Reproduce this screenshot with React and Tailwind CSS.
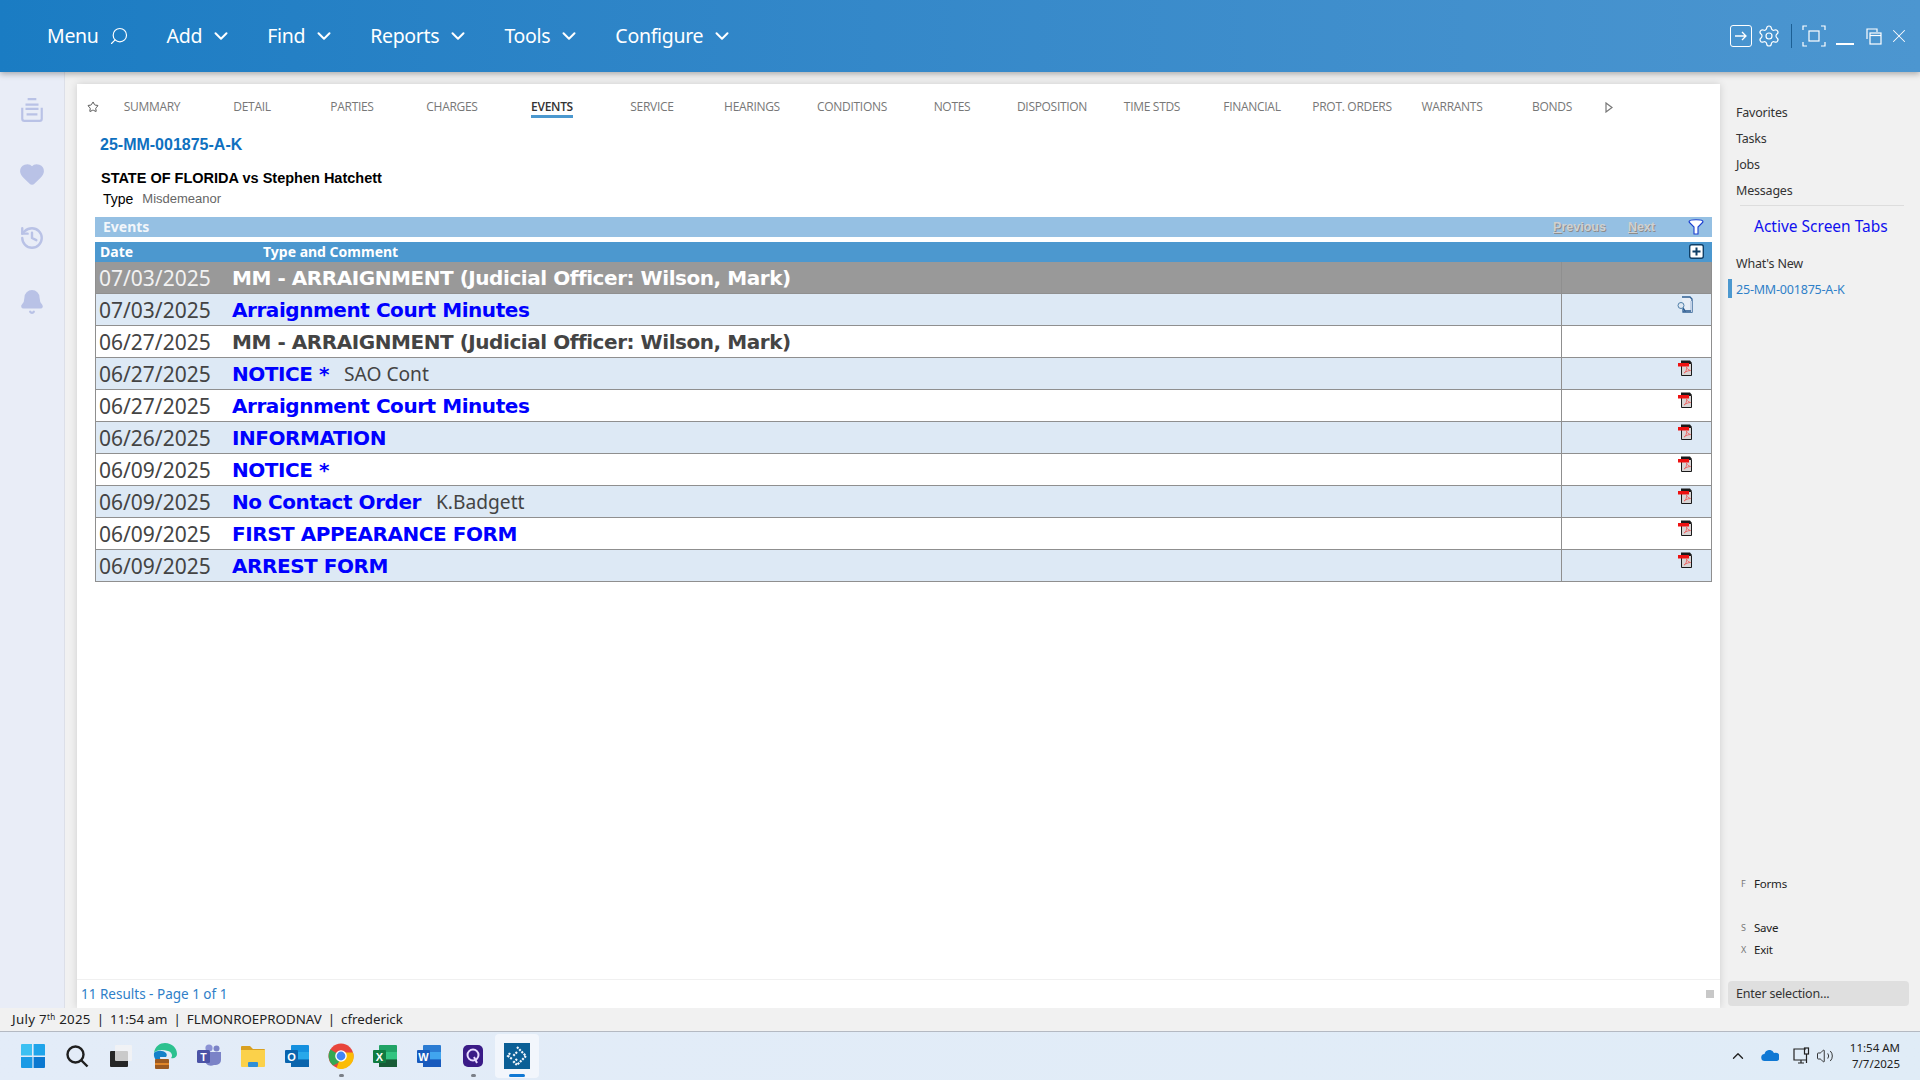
import React from 'react';
import { Search, ChevronDown, Settings, X, Heart, Bell, History, Star, ChevronUp, Volume2 } from 'lucide-react';

const menus = ['Add', 'Find', 'Reports', 'Tools', 'Configure'];
const tabs = ['SUMMARY', 'DETAIL', 'PARTIES', 'CHARGES', 'EVENTS', 'SERVICE', 'HEARINGS', 'CONDITIONS', 'NOTES', 'DISPOSITION', 'TIME STDS', 'FINANCIAL', 'PROT. ORDERS', 'WARRANTS', 'BONDS'];

const arraignment = 'MM - ARRAIGNMENT (Judicial Officer: Wilson, Mark)';
const rows = [
  { date: '07/03/2025', title: arraignment, kind: 'active' },
  { date: '07/03/2025', title: 'Arraignment Court Minutes', kind: 'link', icon: 'view' },
  { date: '06/27/2025', title: arraignment, kind: 'plain' },
  { date: '06/27/2025', title: 'NOTICE *', kind: 'link', comment: 'SAO Cont', icon: 'pdf' },
  { date: '06/27/2025', title: 'Arraignment Court Minutes', kind: 'link', icon: 'pdf' },
  { date: '06/26/2025', title: 'INFORMATION', kind: 'link', icon: 'pdf' },
  { date: '06/09/2025', title: 'NOTICE *', kind: 'link', icon: 'pdf' },
  { date: '06/09/2025', title: 'No Contact Order', kind: 'link', comment: 'K.Badgett', icon: 'pdf' },
  { date: '06/09/2025', title: 'FIRST APPEARANCE FORM', kind: 'link', icon: 'pdf' },
  { date: '06/09/2025', title: 'ARREST FORM', kind: 'link', icon: 'pdf' },
];

const PdfIcon = () => (
  <svg width="15" height="16" viewBox="0 0 15 16">
    <path d="M3.5 3.5h10v12h-10z" fill="#d8d4d4" stroke="#1a1a1a" />
    <path d="M3 .5h9l2 2.5H3z" fill="#1a1a1a" />
    <path d="M0 3h11v3.5H0z" fill="#ee1111" />
    <path d="M6 13c2-1 3-4 2.500-6 .5 2 2 3 4 3.500-2 0-4.500 1-6.500 2.500z" fill="none" stroke="#ee6a6a" strokeWidth="1" />
  </svg>
);

const ViewIcon = () => (
  <svg width="16" height="17" viewBox="0 0 16 17">
    <path d="M5 1h8l2 2v13H6v-3" fill="#e8eef6" stroke="#2f5f93" strokeWidth="1.3" />
    <path d="M14 5v10H9" fill="none" stroke="#c3d2e6" strokeWidth="2" />
    <circle cx="4" cy="9.500" r="3" fill="#dfe8f2" stroke="#4f7fa8" />
    <path d="M6 12l2 3h6" fill="none" stroke="#2f5f93" strokeWidth="1.4" />
  </svg>
);

const EventRow = ({ row, index }) => {
  const bg = row.kind === 'active' ? 'bg-[#999999]' : index % 2 === 1 ? 'bg-[#dde9f5]' : 'bg-white';
  const dateColor = row.kind === 'active' ? 'text-[#f2f2f2]' : 'text-[#444444]';
  const titleColor = row.kind === 'link' ? 'text-[#0000ff]' : row.kind === 'active' ? 'text-white' : 'text-[#444444]';
  return (
    <div className={`flex h-8 border-b border-[#8f8f8f] ${bg}`}>
      <div className="flex flex-1 items-center pt-[2px] pl-[3px]">
        <span className={`w-[133px] text-[21px] ${dateColor}`}>{row.date}</span>
        <span className={`font-['DejaVu_Sans'] text-[20px] font-bold tracking-[-0.45px] ${titleColor}`}>{row.title}</span>
        {row.comment && <span className="ml-[15px] text-[19.200px] text-[#444444]">{row.comment}</span>}
      </div>
      <div className="flex w-[150px] justify-end border-l border-[#8f8f8f] pt-[2px] pr-[18px]">
        {row.icon === 'pdf' && <PdfIcon />}
        {row.icon === 'view' && <ViewIcon />}
      </div>
    </div>
  );
};

const TopBar = () => (
  <header className="relative z-10 flex h-[72px] items-center justify-between bg-gradient-to-r from-[#1a7cc3] to-[#4c96d0] pr-[10px] pl-[47px] text-white shadow-[0_2px_6px_rgba(0,0,0,0.3)]">
    <nav className="flex items-center text-[19.500px] tracking-[-0.3px]">
      <span>Menu</span>
      <Search className="mr-[38px] ml-[10px] h-[20px] w-[20px] -scale-x-100" strokeWidth={1.4} />
      {menus.map((m) => (
        <div key={m} className="mr-[35px] flex items-center gap-[8px]">
          <span>{m}</span>
          <ChevronDown className="h-[22px] w-[22px]" strokeWidth={2.2} />
        </div>
      ))}
    </nav>
    <div className="flex items-center">
      <div className="flex h-[22px] w-[22px] items-center justify-center rounded-[3px] border-[1.5px] border-white">
        <svg width="14" height="12" viewBox="0 0 14 12" fill="none" stroke="white" strokeWidth="1.3"><path d="M1 6h11M8 2l4 4-4 4" /></svg>
      </div>
      <Settings className="ml-[5px] h-[24px] w-[24px]" strokeWidth={1.2} />
      <div className="mx-[10px] h-[24px] w-px bg-[#1c5f94]" />
      <svg width="24" height="22" viewBox="0 0 24 22" fill="none" stroke="white" strokeWidth="1.2">
        <path d="M1 5V1h4M19 1h4v4M23 17v4h-4M5 21H1v-4" />
        <rect x="7" y="6" width="10" height="10" />
      </svg>
      <div className="mt-[15px] ml-[10px] h-[2px] w-[18px] bg-white" />
      <svg className="ml-[12px]" width="16" height="17" viewBox="0 0 16 17" fill="none" stroke="white" strokeWidth="1.2">
        <path d="M1 11V1h10v3" />
        <rect x="4" y="5" width="11" height="11" />
        <path d="M4 7.500h11" />
      </svg>
      <X className="ml-[6px] h-[22px] w-[22px]" strokeWidth={1.1} />
    </div>
  </header>
);

const LeftRail = () => (
  <aside className="flex w-[65px] shrink-0 flex-col items-center gap-[38px] border-r border-[#dcdfe8] bg-[#e9edf7] pt-[25px] text-[#b9c2e6]">
    <svg width="26" height="26" viewBox="0 0 24 24" fill="none" stroke="currentColor" strokeWidth="2">
      <path d="M8 2h8M6 7h12M6 11h12M3 10v10a2 2 0 002 2h14a2 2 0 002-2V10M7 16h10" />
    </svg>
    <Heart className="h-[26px] w-[26px] fill-current" />
    <History className="h-[26px] w-[26px]" strokeWidth={2.2} />
    <Bell className="h-[26px] w-[26px] fill-current" />
  </aside>
);

const MainPanel = () => (
  <main className="flex w-[1643px] shrink-0 flex-col bg-white shadow-[0_0_8px_rgba(0,0,0,0.15)]">
    <div className="flex h-[38px] items-center pt-[8px] pl-[10px] font-['Open_Sans'] text-[12px] tracking-[-0.3px] text-[#777777]">
      <Star className="h-[12px] w-[12px] text-[#555555]" />
      <div className="ml-[3px] flex">
        {tabs.map((t) => (
          <div key={t} className="w-[100px] text-center">
            <span className={t === 'EVENTS' ? 'border-b-[3px] border-[#4b98cf] font-semibold text-[#333333]' : ''}>{t}</span>
          </div>
        ))}
      </div>
      <svg className="ml-[3px]" width="8" height="11" viewBox="0 0 8 11" fill="none" stroke="#777" strokeWidth="1.2"><path d="M1 1l6 4.500L1 10z" /></svg>
    </div>
    <div className="pt-[11px] pl-[23px] font-['Liberation_Sans'] text-[16px] font-bold text-[#0f70bf]">25-MM-001875-A-K</div>
    <div className="mt-[11px] pl-[24px] font-['Liberation_Sans'] text-[14.500px] font-bold text-black">STATE OF FLORIDA vs Stephen Hatchett</div>
    <div className="-mt-[1px] flex gap-[9px] pl-[26px] font-['Liberation_Sans'] text-[14px] text-black">
      <span>Type</span>
      <span className="text-[13px] text-[#666666]">Misdemeanor</span>
    </div>
    <div className="mt-[7px] mr-[8px] ml-[18px] flex flex-1 flex-col font-['Noto_Sans']">
      <div className="flex h-[20px] items-center justify-between bg-[#95c0e3] pr-[8px] pl-[8px] text-[14px] font-bold text-[#f2f6fa]">
        <span>Events</span>
        <div className="flex items-center font-['Liberation_Sans'] text-[12.500px] font-bold text-[#d0d0d0] [text-shadow:1px_1px_0_#8c8c8c]">
          <span className="pt-[2px]"><u>P</u>revious</span>
          <span className="ml-[22px] pt-[2px]"><u>N</u>ext</span>
          <svg className="ml-[33px]" width="16" height="16" viewBox="0 0 16 16" fill="#fff" stroke="#1a3fd0" strokeWidth="1.1">
            <ellipse cx="8" cy="2.500" rx="7" ry="1.800" />
            <path d="M1 3l5 5v7h4V8l5-5" />
          </svg>
        </div>
      </div>
      <div className="mt-[5px] flex h-[20px] items-center bg-[#4c98cf] pr-[8px] pl-[5px] text-[14px] font-bold text-white">
        <span className="w-[163px]">Date</span>
        <span className="flex-1">Type and Comment</span>
        <svg width="15" height="15" viewBox="0 0 15 15">
          <rect x=".7" y=".7" width="13.600" height="13.600" rx="2" fill="#fff" stroke="#0f3f66" strokeWidth="1.4" />
          <path d="M7.500 3.500v8M3.500 7.500h8" stroke="#0f3f66" strokeWidth="2" />
        </svg>
      </div>
      <div className="border-x border-[#8f8f8f]">
        {rows.map((r, i) => <EventRow key={i} row={r} index={i} />)}
      </div>
    </div>
    <div className="flex h-[29px] items-center justify-between border-t border-[#f0f0f0] pr-[6px] pl-[4px] font-['Noto_Sans'] text-[13.500px] text-[#2f80c8]">
      <span>11 Results - Page 1 of 1</span>
      <div className="h-[8px] w-[8px] bg-[#c8c8c8]" />
    </div>
  </main>
);

const SideLink = ({ children }) => <div className="h-[26px] leading-[26px] text-[#333333]">{children}</div>;

const ActionLink = ({ hotkey, label }) => (
  <div className="flex h-[22px] items-center text-[11.500px] text-[#222222]">
    <span className="w-[18px] pl-[5px] text-[9px] text-[#777777]">{hotkey}</span>
    <span>{label}</span>
  </div>
);

const RightPanel = () => (
  <aside className="flex flex-1 flex-col pt-[16px] pr-[11px] pl-[16px] font-['Noto_Sans'] text-[12.500px] tracking-[-0.2px]">
    <SideLink>Favorites</SideLink>
    <SideLink>Tasks</SideLink>
    <SideLink>Jobs</SideLink>
    <SideLink>Messages</SideLink>
    <div className="mt-[1px] mr-[5px] ml-[4px] h-px bg-[#dddddd]" />
    <div className="pt-[9px] pl-[18px] text-[15.500px] tracking-normal text-[#1010ee]">Active Screen Tabs</div>
    <div className="mt-[13px]"><SideLink>What's New</SideLink></div>
    <div className="relative text-[#2f80c8]">
      <div className="absolute top-[2px] -left-[8px] h-[19px] w-[4px] bg-[#4c98cf]" />
      <div className="h-[26px] leading-[26px]">25-MM-001875-A-K</div>
    </div>
    <div className="flex-1" />
    <ActionLink hotkey="F" label="Forms" />
    <div className="h-[22px]" />
    <ActionLink hotkey="S" label="Save" />
    <ActionLink hotkey="X" label="Exit" />
    <div className="mt-[20px] mb-[2px] -ml-[8px] flex h-[25px] items-center rounded-[4px] bg-[#dfdfdf] pt-[1px] pl-[8px] text-[12.500px] text-[#333333]">Enter selection...</div>
  </aside>
);

const StatusBar = () => (
  <div className="flex h-[24px] items-center gap-[6px] border-b border-[#b4b9c2] bg-[#f1f1f1] pl-[12px] font-['Noto_Sans'] text-[13.300px] text-[#222222]">
    <span className="tracking-[0.3px]">July 7<sup className="text-[8px]">th</sup> 2025</span><span>|</span>
    <span>11:54 am</span><span>|</span>
    <span>FLMONROEPRODNAV</span><span>|</span>
    <span>cfrederick</span>
  </div>
);

const TaskIcon = ({ children, dot, active }) => (
  <div className={`relative flex h-[44px] w-[44px] items-center justify-center rounded-[4px] ${active ? 'bg-[#f2f6fc]' : ''}`}>
    {children}
    {dot && <div className="absolute bottom-[1px] h-[3px] w-[5px] rounded-full bg-[#7a7f87]" />}
    {active && <div className="absolute bottom-[1px] h-[3px] w-[16px] rounded-full bg-[#0f78d4]" />}
  </div>
);

const OfficeIcon = ({ letter, tile, colors }) => (
  <svg width="26" height="26" viewBox="0 0 26 26">
    <rect x="7" y="2" width="18" height="22" rx="1" fill={colors[0]} />
    <rect x="7" y="9" width="18" height="7.500" fill={colors[1]} />
    <rect x="7" y="16.500" width="18" height="7.500" fill={colors[2]} />
    <rect x="1" y="7" width="13" height="13" rx="1" fill={tile} />
    <text x="7.500" y="17.500" textAnchor="middle" fontSize="11" fontWeight="700" fill="#fff" fontFamily="Liberation Sans">{letter}</text>
  </svg>
);

const Taskbar = () => (
  <div className="flex h-[48px] items-center justify-between bg-gradient-to-r from-[#e3ecf8] to-[#e0ecf7] pr-[20px] pl-[11px]">
    <div className="flex items-center">
      <TaskIcon>
        <svg width="24" height="24" viewBox="0 0 24 24">
          <path d="M0 1a1 1 0 011-1h10v11.400H0z" fill="#3cc0f2" />
          <path d="M12.600 0H23a1 1 0 011 1v10.400H12.600z" fill="#1fa4ea" />
          <path d="M0 13h11.400v11H1a1 1 0 01-1-1z" fill="#1a9ae5" />
          <path d="M12.600 13H24v10a1 1 0 01-1 1H12.600z" fill="#0b78d0" />
        </svg>
      </TaskIcon>
      <TaskIcon>
        <svg width="24" height="24" viewBox="0 0 24 24" fill="none" stroke="#1f1f1f" strokeWidth="2.400">
          <circle cx="10.500" cy="10.500" r="8" />
          <path d="M16.500 16.500l6 6" />
        </svg>
      </TaskIcon>
      <TaskIcon>
        <svg width="24" height="24" viewBox="0 0 24 24">
          <rect x="1" y="7" width="18" height="16" rx="1" fill="#262626" />
          <rect x="6" y="1" width="17" height="16" rx="1" fill="#f4f4f4" fillOpacity="0.800" />
        </svg>
      </TaskIcon>
      <TaskIcon>
        <svg width="26" height="28" viewBox="0 0 26 28">
          <path d="M2 11C3 4 8 1 13 1c7 0 12 5 12 11 0 3-3 5-6 4 2-2 1-6-3-7C10 7 4 8 2 11z" fill="#2cc18f" />
          <path d="M2 11c3-3 9-3 12 0 1 1 1 3 0 4H8c0 3 1 5 3 6-5 0-10-4-9-10z" fill="#1481c9" />
          <rect x="3" y="17" width="14" height="10" rx="1" fill="#9c5a22" />
          <rect x="3" y="21" width="14" height="2" fill="#e0862a" />
        </svg>
      </TaskIcon>
      <TaskIcon>
        <svg width="26" height="24" viewBox="0 0 26 24">
          <circle cx="20.500" cy="4.500" r="3" fill="#7b83c7" />
          <circle cx="13" cy="4" r="3.600" fill="#8b92d4" />
          <path d="M9 8h16v8a5 5 0 01-5 5h-2c-5 2-9-1-9-5z" fill="#7b83c7" />
          <rect x="1" y="6" width="13" height="13" rx="1.500" fill="#4b53a6" />
          <text x="7.500" y="16.500" textAnchor="middle" fontSize="10.500" fontWeight="700" fill="#fff" fontFamily="Liberation Sans">T</text>
        </svg>
      </TaskIcon>
      <TaskIcon>
        <svg width="26" height="24" viewBox="0 0 26 24">
          <path d="M1 3a1 1 0 011-1h8l3 3h11a1 1 0 011 1v3H1z" fill="#d9a020" />
          <path d="M1 6h24v16a1 1 0 01-1 1H2a1 1 0 01-1-1z" fill="#fbd14a" />
          <rect x="8" y="18" width="10" height="5" rx="1" fill="#2f8fd8" />
        </svg>
      </TaskIcon>
      <TaskIcon>
        <OfficeIcon letter="O" tile="#0a64ad" colors={['#1490df', '#28a8ea', '#0a64ad']} />
      </TaskIcon>
      <TaskIcon dot>
        <svg width="26" height="26" viewBox="0 0 26 26">
          <circle cx="13" cy="13" r="12.500" fill="#e8453c" />
          <path d="M13 13L2.500 6.500A12.500 12.500 0 005 22.500l8-4z" fill="#34a853" />
          <path d="M13 13l-4.500 12A12.500 12.500 0 0025 9.500H13z" fill="#fbbc05" />
          <circle cx="13" cy="13" r="5.800" fill="#fff" />
          <circle cx="13" cy="13" r="4.400" fill="#4285f4" />
        </svg>
      </TaskIcon>
      <TaskIcon>
        <OfficeIcon letter="X" tile="#107c41" colors={['#21a366', '#33c481', '#185c37']} />
      </TaskIcon>
      <TaskIcon>
        <OfficeIcon letter="W" tile="#185abd" colors={['#2b7cd3', '#41a5ee', '#185abd']} />
      </TaskIcon>
      <TaskIcon dot>
        <svg width="24" height="24" viewBox="0 0 24 24">
          <rect x="2" y="1" width="20" height="22" rx="5" fill="#3a1b87" />
          <circle cx="12" cy="11" r="5.500" fill="none" stroke="#e8dcff" strokeWidth="2" />
          <path d="M13 13l3 6" stroke="#e8dcff" strokeWidth="2" />
        </svg>
      </TaskIcon>
      <TaskIcon active>
        <svg width="26" height="26" viewBox="0 0 26 26">
          <rect width="26" height="26" fill="#0b5f96" />
          <path d="M13 4l9 9-9 9-3-3 3-3M6 10l-2 3 4 3M13 9l-4 4" fill="none" stroke="#f2f6fc" strokeWidth="2.200" strokeDasharray="2 1.200" />
        </svg>
      </TaskIcon>
    </div>
    <div className="flex items-center text-[#222222]">
      <ChevronUp className="h-[18px] w-[18px]" strokeWidth={1.8} />
      <svg className="ml-[14px]" width="18" height="12" viewBox="0 0 18 12">
        <path d="M4 11a3.500 3.500 0 01-.5-7A5 5 0 0113 3a4 4 0 013 8z" fill="#0f78d4" />
      </svg>
      <svg className="ml-[14px]" width="18" height="18" viewBox="0 0 18 18" fill="none" stroke="#222" strokeWidth="1.200">
        <path d="M13 2H1v11h12M5 16h6M8 13v3" />
        <rect x="11.500" y="1" width="4" height="6" />
        <path d="M13.500 7v9" />
      </svg>
      <Volume2 className="ml-[5px] h-[18px] w-[18px]" strokeWidth={1.2} />
      <div className="ml-[16px] text-right font-['Noto_Sans'] text-[11.500px] leading-[16px]">
        <div>11:54 AM</div>
        <div>7/7/2025</div>
      </div>
    </div>
  </div>
);

export default function App() {
  return (
    <div className="flex h-[1080px] w-[1920px] flex-col overflow-hidden bg-[#f1f1f1] font-['Noto_Sans']">
      <TopBar />
      <div className="flex min-h-0 flex-1">
        <LeftRail />
        <div className="flex flex-1 pt-[12px] pl-[12px]">
          <MainPanel />
          <RightPanel />
        </div>
      </div>
      <StatusBar />
      <Taskbar />
    </div>
  );
}
